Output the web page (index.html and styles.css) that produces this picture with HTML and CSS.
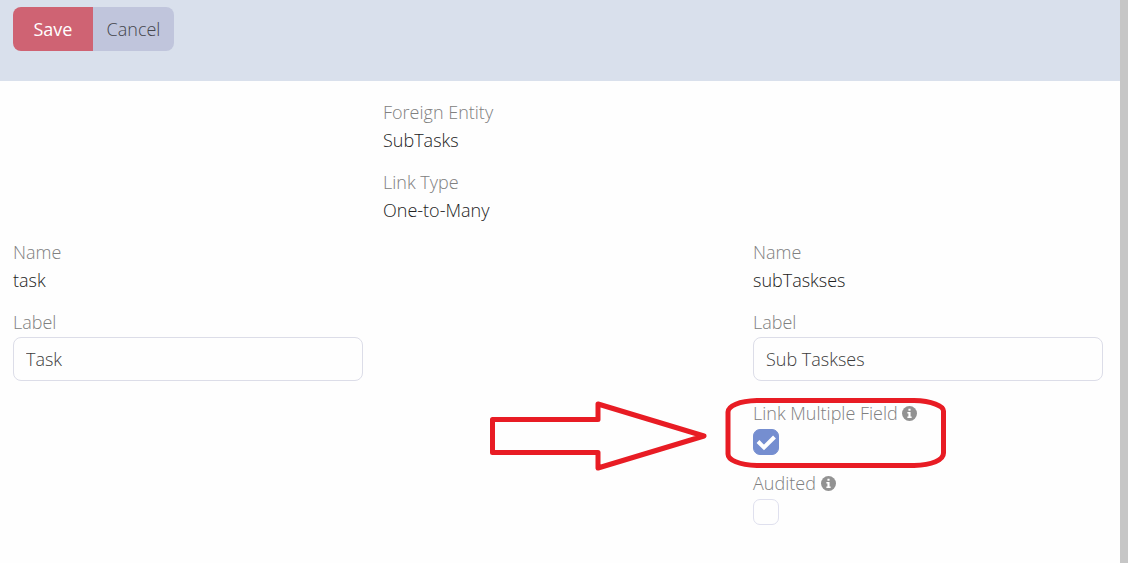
FILE: index.html
```html
<!DOCTYPE html>
<html lang="en">
<head>
<meta charset="utf-8">
<meta name="viewport" content="width=device-width, initial-scale=1">
<title>Edit Link</title>
<link rel="stylesheet" href="styles.css">
</head>
<body>
<form class="page">
  <header class="toolbar">
    <div class="button-group">
      <button type="button" class="btn btn-save">Save</button>
      <button type="button" class="btn btn-cancel">Cancel</button>
    </div>
  </header>
  <main class="content">
    <div class="row">
      <dl class="field center">
        <dt class="label">Foreign Entity</dt>
        <dd class="value">SubTasks</dd>
      </dl>
    </div>
    <div class="row">
      <dl class="field center">
        <dt class="label">Link Type</dt>
        <dd class="value">One-to-Many</dd>
      </dl>
    </div>
    <div class="row">
      <dl class="field">
        <dt class="label">Name</dt>
        <dd class="value">task</dd>
      </dl>
      <dl class="field last">
        <dt class="label">Name</dt>
        <dd class="value">subTaskses</dd>
      </dl>
    </div>
    <div class="row">
      <div class="field">
        <label class="label" for="label-left">Label</label>
        <input class="text-input" id="label-left" type="text" value="Task">
      </div>
      <div class="field last">
        <label class="label" for="label-right">Label</label>
        <input class="text-input" id="label-right" type="text" value="Sub Taskses">
      </div>
    </div>
    <div class="row">
      <div class="field last">
        <label class="label" for="link-multiple">Link Multiple Field
          <svg class="info" viewBox="0 0 14 14" aria-hidden="true"><circle cx="7" cy="7" r="7"/><path d="M6 2.500h2v2H6zM5 5.700h3v4h1v1.400H5V9.700h1V7.100H5z"/></svg>
        </label>
        <input class="checkbox" id="link-multiple" type="checkbox" checked>
        <svg class="annotation" viewBox="485 395 465 77" aria-hidden="true">
          <path d="M492.500 419.500H598V404L704 436L598 468V452.500H492.500Z"/>
          <path d="M728 412C728 406 739 401 757 400.500H914C932 401 943.500 406 943.500 411V453C943.500 460 932 465 914 465.500H757C739 465 728 460 728 454Z"/>
        </svg>
      </div>
    </div>
    <div class="row">
      <div class="field last">
        <label class="label" for="audited">Audited
          <svg class="info" viewBox="0 0 14 14" aria-hidden="true"><circle cx="7" cy="7" r="7"/><path d="M6 2.500h2v2H6zM5 5.700h3v4h1v1.400H5V9.700h1V7.100H5z"/></svg>
        </label>
        <input class="checkbox" id="audited" type="checkbox">
      </div>
    </div>
  </main>
</form>
</body>
</html>
```
FILE: styles.css
```css
* {
  box-sizing: border-box;
}

body {
  margin: 0;
  background: #fefefe;
  color: #222;
  font: 300 18px/28px "Open Sans", "Noto Sans", sans-serif;
}

/* The right border is the scroll track beside the form. */
.page {
  min-height: 100vh;
  border-right: 8px solid #c6c6c6;
}

.toolbar {
  padding: 7px 13px 30px;
  background: #d9e0ec;
}

.button-group {
  display: flex;
}

.btn {
  height: 44px;
  padding: 0 13px;
  border: 0;
  font: inherit;
}

.btn-save {
  min-width: 80px;
  border-radius: 8px 0 0 8px;
  background: #cf6373;
  color: #fff;
  font-weight: 400;
}

.btn-cancel {
  min-width: 81px;
  border-radius: 0 8px 8px 0;
  background: #c0c5dc;
  color: #44454c;
}

.content {
  display: grid;
  gap: 14px;
  padding: 17px 17px 17px 13px;
}

.row {
  display: grid;
  grid-template-columns: repeat(3, 1fr);
  column-gap: 20px;
}

.field {
  position: relative;
  margin: 0;
}

.center {
  grid-column: 2;
}

.last {
  grid-column: 3;
}

.label {
  display: block;
  color: #808080;
}

.value {
  margin: 0;
}

.text-input {
  display: block;
  width: 100%;
  height: 44px;
  margin: 1px 0 4px;
  padding: 0 12px;
  border: 1px solid #dcdde8;
  border-radius: 8px;
  background: #fefefe;
  color: #3c3c3c;
  font: inherit;
}

.checkbox {
  display: block;
  appearance: none;
  width: 26px;
  height: 26px;
  margin: 2px 0 0;
  border: 1px solid #dfe0ee;
  border-radius: 7px;
  background: #fefefe;
}

.checkbox:checked {
  border-color: #758ed0;
  background: #758ed0 url("data:image/svg+xml,%3Csvg xmlns='http://www.w3.org/2000/svg' viewBox='0 0 24 24'%3E%3Cpath d='M4 11.500l6 6L20.500 7' fill='none' stroke='white' stroke-width='4'/%3E%3C/svg%3E") center / 24px 24px no-repeat;
}

.info {
  width: 15px;
  height: 15px;
  vertical-align: -1px;
  fill: #929292;
}

.info path {
  fill: #fff;
}

.annotation {
  position: absolute;
  top: -4px;
  left: -268px;
  width: 465px;
  height: 77px;
  fill: none;
  stroke: #e81c24;
  stroke-width: 5;
  stroke-linejoin: round;
  pointer-events: none;
}
```
